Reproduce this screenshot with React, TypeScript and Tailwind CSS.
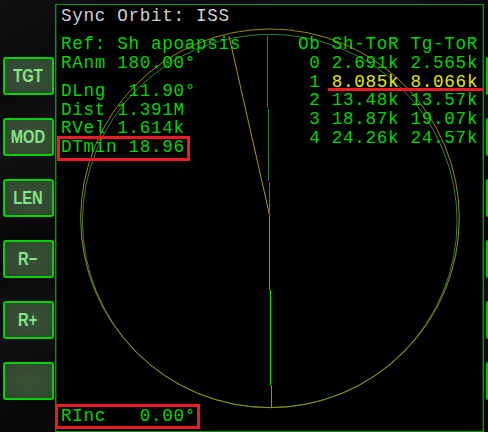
import React from "react";

const mono = "font-['Liberation_Mono','Courier_New',monospace]";

const keys = ["TGT", "MOD", "LEN", "R−", "R+", ""];

const orbits = [
  ["0", "2.691k", "2.565k"],
  ["1", "8.085k", "8.066k"],
  ["2", "13.48k", "13.57k"],
  ["3", "18.87k", "19.07k"],
  ["4", "24.26k", "24.57k"],
];

function Line({ children, className = "" }: { children: React.ReactNode; className?: string }) {
  return <div className={`h-[18.7px] whitespace-pre ${className}`}>{children}</div>;
}

function Key({ label }: { label: string }) {
  return (
    <div className="flex h-[38px] w-[51px] shrink-0 items-center justify-center rounded-[3px] border-2 border-[#00d300] bg-[#314832] bg-radial from-[#3b503a] to-[#30462f]">
      <span className="scale-x-[0.82] font-['Liberation_Sans',Arial,sans-serif] text-[18px] leading-none font-bold text-[#84e684]">
        {label}
      </span>
    </div>
  );
}

function OrbitPlot() {
  return (
    <svg className="pointer-events-none absolute inset-0" width="488" height="432" viewBox="0 0 488 432" fill="none" strokeWidth="1">
      <ellipse cx="269.8" cy="221" rx="187.3" ry="186.7" stroke="#347f3f" />
      <circle cx="270" cy="218.3" r="189.3" stroke="#988c07" />
      <path d="M229 36L270 217" stroke="#aa9a00" />
      <g shapeRendering="crispEdges">
        <path d="M267 34L269.5 217" stroke="#2d8739" />
        <path d="M269.5 217L270.5 361L271.5 407" stroke="#00e500" />
      </g>
    </svg>
  );
}

export default function App() {
  return (
    <div className="relative flex h-[432px] w-[488px] overflow-hidden bg-[#09090b] bg-[linear-gradient(155deg,#101013_0%,#09090a_14%,#111114_24%,#070708_38%,#101012_52%,#060607_66%,#111113_79%,#080809_100%)]">
      <div className="flex w-[55px] shrink-0 flex-col gap-[23px] pt-[57px] pl-[2.5px]">
        {keys.map((k, i) => (
          <Key key={i} label={k} />
        ))}
      </div>
      <main className={`mt-1 h-[428px] w-[429px] shrink-0 border border-[#009c00] bg-black text-[17.6px] leading-[18.7px] tracking-[0.7px] text-[#00d600] shadow-[inset_1px_0_0_#004800,inset_-1px_0_0_#004800] ${mono}`}>
        <OrbitPlot />
        <div className="relative flex h-full flex-col pt-[2px] pl-[5px]">
          <Line className="text-[#d0d0d0]">Sync Orbit: ISS</Line>
          <div className="mt-[9.5px] flex">
            <div className="w-[237px]">
              <Line>Ref: Sh apoapsis</Line>
              <Line>RAnm 180.00°</Line>
              <Line className="mt-[9.3px]">DLng  11.90°</Line>
              <Line>Dist 1.391M</Line>
              <Line>RVel 1.614k</Line>
              <Line>DTmin 18.96</Line>
            </div>
            <div>
              <Line>Ob Sh-ToR Tg-ToR</Line>
              {orbits.map(([n, sh, tg]) => (
                <Line key={n}>
                  {" " + n + " "}
                  <span className={n === "1" ? "text-[#e8e800]" : ""}>{sh + " " + tg}</span>
                </Line>
              ))}
            </div>
          </div>
          <Line className="mt-auto mb-[5px]">RInc   0.00°</Line>
        </div>
      </main>
      <div className="flex w-[4px] shrink-0 flex-col gap-[23px] pt-[57px] pl-[2px]">
        {keys.map((_, i) => (
          <div key={i} className="h-[38px] w-[2px] shrink-0 rounded-l-[2px] bg-[#00c600]" />
        ))}
      </div>
      <div className="absolute top-[136px] left-[57px] h-[25px] w-[133px] border-3 border-[#ed1c24]" />
      <div className="absolute top-[404px] left-[55px] h-[25px] w-[145px] border-3 border-[#ed1c24]" />
      <div className="absolute top-[88px] left-[328px] h-[3px] w-[156px] bg-[#ed1c24]" />
    </div>
  );
}
